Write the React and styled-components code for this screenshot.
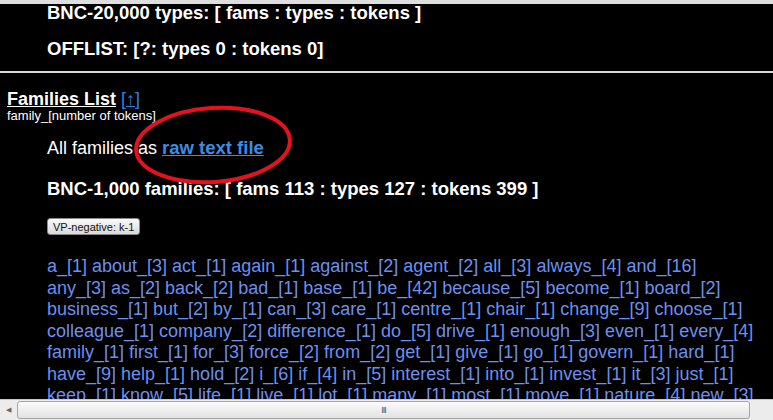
import React from 'react';
import styled, { createGlobalStyle } from 'styled-components';

const GlobalStyle = createGlobalStyle`
  html, body {
    margin: 0;
    padding: 0;
    background: #000;
    overflow: hidden;
  }
  body {
    font-family: "Liberation Sans", Arial, sans-serif;
    color: #fff;
  }
`;

const Screen = styled.div`
  position: relative;
  width: 773px;
  height: 420px;
  overflow: hidden;
  background: #000;
`;

const TopStrip = styled.div`
  height: 4px;
  background: #dedede;
`;

const Page = styled.div`
  padding: 0 0 0 7px;
`;

const Indent = styled.div`
  padding-left: 40px;
`;

const Stat = styled.div`
  font-weight: bold;
  font-size: 18.5px;
  line-height: 18px;
  white-space: nowrap;
  margin-top: ${(p) => p.$top || 0}px;
`;

const Rule = styled.div`
  height: 2px;
  margin: 13px 0 0 0;
  background: #d8d8d8;
`;

const SectionTitle = styled.div`
  margin-top: 17px;
  font-weight: bold;
  font-size: 18px;
  line-height: 18px;
  span {
    text-decoration: underline;
  }
`;

const UpLink = styled.a`
  font-weight: normal;
  color: #2f7fe0;
  text-decoration: underline;
  font-size: 18px;
  margin-left: 5px;
`;

const Caption = styled.div`
  font-size: 13px;
  line-height: 16px;
`;

const Plain = styled.div`
  margin-top: 15px;
  font-size: 18px;
  line-height: 18px;
`;

const RawLink = styled.a`
  color: #3a8ee6;
  font-weight: bold;
  font-size: 18.5px;
  text-decoration: underline;
`;

const Button = styled.button`
  display: block;
  margin-top: 20px;
  height: 17px;
  padding: 0 5px;
  font-family: "Liberation Sans", Arial, sans-serif;
  font-size: 11px;
  line-height: 12px;
  color: #111;
  background: linear-gradient(#fafafa, #dadada);
  border: 1px solid #8a8a8a;
  border-radius: 3px;
`;

const WordList = styled.div`
  margin-top: 21px;
  color: #6b90ee;
  font-size: 18px;
  line-height: 21.5px;
`;

const WordLine = styled.div`
  white-space: nowrap;
`;

const Ellipse = styled.svg`
  position: absolute;
  left: 130px;
  top: 102px;
  width: 166px;
  height: 86px;
  pointer-events: none;
`;

const ScrollBar = styled.div`
  position: absolute;
  left: 0;
  right: 0;
  bottom: 0;
  height: 20px;
  display: flex;
  align-items: center;
  background: #ececec;
  border-top: 1px solid #c8c8c8;
`;

const Arrow = styled.div`
  width: 16px;
  height: 100%;
  display: flex;
  align-items: center;
  justify-content: center;
  color: #666;
  font-size: 7px;
`;

const Thumb = styled.div`
  width: 731px;
  height: 16px;
  margin-left: 1px;
  display: flex;
  align-items: center;
  justify-content: center;
  background: linear-gradient(#fbfbfb, #e2e2e2);
  border: 1px solid #a5a5a5;
  border-radius: 3px;
  font-size: 9px;
  color: #555;
  letter-spacing: -1px;
`;

const lines = [
  'a_[1] about_[3] act_[1] again_[1] against_[2] agent_[2] all_[3] always_[4] and_[16]',
  'any_[3] as_[2] back_[2] bad_[1] base_[1] be_[42] because_[5] become_[1] board_[2]',
  'business_[1] but_[2] by_[1] can_[3] care_[1] centre_[1] chair_[1] change_[9] choose_[1]',
  'colleague_[1] company_[2] difference_[1] do_[5] drive_[1] enough_[3] even_[1] every_[4]',
  'family_[1] first_[1] for_[3] force_[2] from_[2] get_[1] give_[1] go_[1] govern_[1] hard_[1]',
  'have_[9] help_[1] hold_[2] i_[6] if_[4] in_[5] interest_[1] into_[1] invest_[1] it_[3] just_[1]',
  'keep_[1] know_[5] life_[1] live_[1] lot_[1] many_[1] most_[1] move_[1] nature_[4] new_[3]',
];

export default function App() {
  return (
    <Screen>
      <GlobalStyle />
      <TopStrip />
      <Page>
        <Indent>
          <Stat>BNC-20,000 types: [ fams : types : tokens ]</Stat>
          <Stat $top={18}>OFFLIST: [?: types 0 : tokens 0]</Stat>
        </Indent>
      </Page>
      <Rule />
      <Page>
        <SectionTitle>
          <span>Families List</span>
          <UpLink href="#">[↑]</UpLink>
        </SectionTitle>
        <Caption>family_[number of tokens]</Caption>
        <Indent>
          <Plain>
            All families as <RawLink href="#">raw text file</RawLink>
          </Plain>
          <Stat $top={23}>BNC-1,000 families: [ fams 113 : types 127 : tokens 399 ]</Stat>
          <Button>VP-negative: k-1</Button>
          <WordList>
            {lines.map((l) => (
              <WordLine key={l}>{l}</WordLine>
            ))}
          </WordList>
        </Indent>
      </Page>
      <Ellipse viewBox="0 0 166 86">
        <ellipse
          cx="83"
          cy="43"
          rx="77"
          ry="37"
          fill="none"
          stroke="#e3121e"
          strokeWidth="4"
          transform="rotate(-4 83 43)"
        />
      </Ellipse>
      <ScrollBar>
        <Arrow>◀</Arrow>
        <Thumb>III</Thumb>
      </ScrollBar>
    </Screen>
  );
}
